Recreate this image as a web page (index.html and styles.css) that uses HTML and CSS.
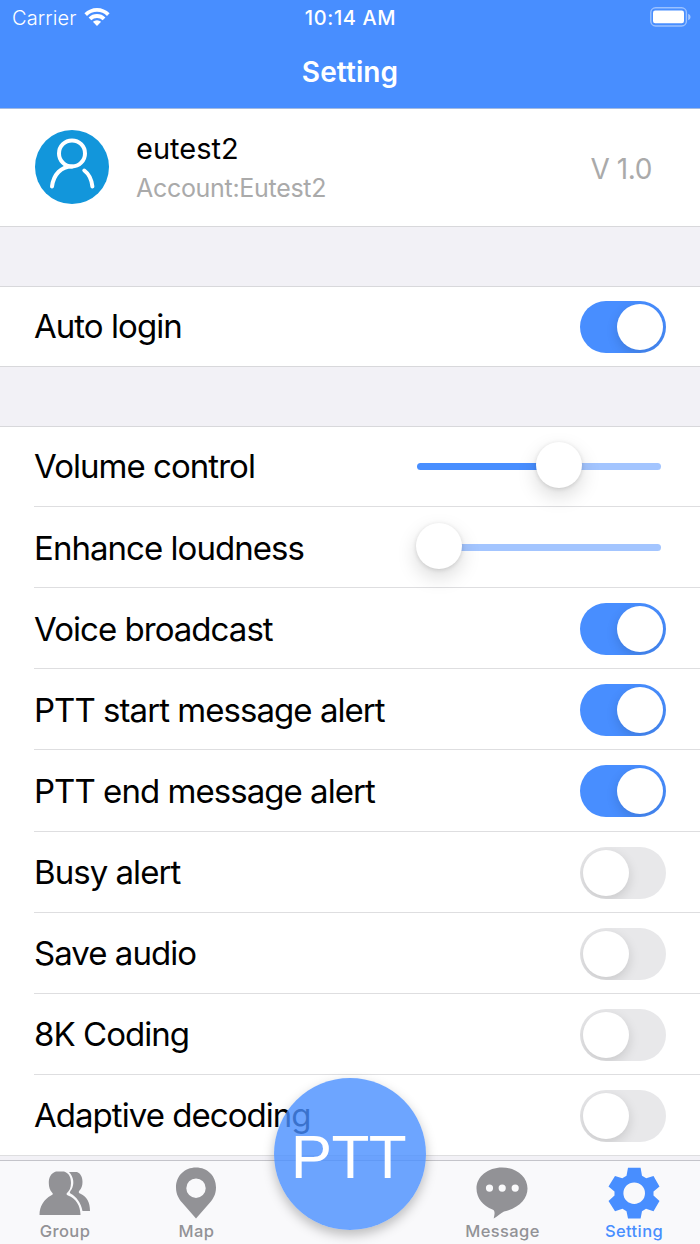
FILE: index.html
```html
<!DOCTYPE html>
<html lang="en">
<head>
    <meta charset="UTF-8">
    <meta name="viewport" content="width=device-width, initial-scale=1.0">
    <title>Setting</title>
    <link rel="stylesheet" href="styles.css">
</head>
<body>
    <header class="header">
        <div class="status-bar">
            <div class="carrier">
                <span>Carrier</span>
                <svg width="26" height="20" viewBox="0 0 26 20">
                    <path d="M0.4 6.2a18 18 0 0 1 25.2 0l-2.6 2.7a14.3 14.3 0 0 0-20 0z" fill="#fff"/>
                    <path d="M4.6 10.5a12 12 0 0 1 16.8 0l-2.7 2.7a8.2 8.2 0 0 0-11.4 0z" fill="#fff"/>
                    <path d="M8.9 14.8a6 6 0 0 1 8.2 0L13 19z" fill="#fff"/>
                </svg>
            </div>
            <div class="time">10:14 AM</div>
            <div class="battery">
                <svg width="41" height="20" viewBox="0 0 41 20">
                    <rect x="0.8" y="0.8" width="35.6" height="18.2" rx="4.8" fill="none" stroke="#fff" stroke-opacity="0.45" stroke-width="1.4"/>
                    <rect x="3" y="3.6" width="31" height="12.6" rx="2.2" fill="#fff"/>
                    <path d="M38.2 6.800v6.400q2.400-1 2.400-3.200t-2.400-3.200z" fill="#fff" fill-opacity="0.5"/>
                </svg>
            </div>
        </div>
        <h1 class="title">Setting</h1>
    </header>

    <main>
        <section class="profile">
            <svg class="avatar" width="74" height="74" viewBox="0 0 74 74">
                <circle cx="37" cy="37" r="37" fill="#1296db"/>
                <g fill="none" stroke="#fff" stroke-width="4" stroke-linecap="round">
                    <circle cx="37" cy="23.4" r="13"/>
                    <path d="M17 56.500C18.500 44.500 26 36.500 37 36.500"/>
                    <path d="M49.300 40.500C54 44 56.600 49.500 57.400 56.500"/>
                </g>
            </svg>
            <div class="profile-info">
                <div class="name">eutest2</div>
                <div class="account">Account:Eutest2</div>
            </div>
            <div class="version">V 1.0</div>
        </section>

        <section class="group">
            <div class="row">
                <span class="label">Auto login</span>
                <div class="switch on"></div>
            </div>
        </section>

        <section class="group settings">
            <div class="row">
                <span class="label">Volume control</span>
                <div class="slider"><div class="fill"></div><div class="thumb"></div><div class="rest"></div></div>
            </div>
            <div class="row">
                <span class="label">Enhance loudness</span>
                <div class="slider min"><div class="thumb"></div><div class="rest"></div></div>
            </div>
            <div class="row">
                <span class="label">Voice broadcast</span>
                <div class="switch on"></div>
            </div>
            <div class="row">
                <span class="label">PTT start message alert</span>
                <div class="switch on"></div>
            </div>
            <div class="row">
                <span class="label">PTT end message alert</span>
                <div class="switch on"></div>
            </div>
            <div class="row">
                <span class="label">Busy alert</span>
                <div class="switch"></div>
            </div>
            <div class="row">
                <span class="label">Save audio</span>
                <div class="switch"></div>
            </div>
            <div class="row">
                <span class="label">8K Coding</span>
                <div class="switch"></div>
            </div>
            <div class="row">
                <span class="label">Adaptive decoding</span>
                <div class="switch"></div>
            </div>
        </section>
    </main>

    <nav class="tab-bar">
        <div class="tab">
            <svg width="52" height="52" viewBox="0 0 52 52" fill="#929296">
                <path d="M30 5h8c4 1.500 5.500 5.500 5.500 10 0 4-1.200 6.500-3 8.500-1.300 1.500-.8 2.500 1 3.300C48 30 51 35 51 44h-7.500C42 36 37.500 29.500 31.500 26.500c-1.500-1 0-2.500 1-4 3-5 2.500-12.500-2.500-17.500z"/>
                <path d="M17 4.500h8c5 1.500 7 6 7 11.500 0 5-1.800 8-4 10-1.200 1.200 0 2 1 2.400C37 31.500 41.500 38.500 41.500 48H.5C.5 39 5 32.500 12 28.500c2-1 2.500-1.500 1-3-2-2-3.200-5.500-3.200-9.500 0-5.500 2.200-10 7.200-11.500z"/>
            </svg>
            <span>Group</span>
        </div>
        <div class="tab">
            <svg width="52" height="52" viewBox="0 0 52 52" fill="#929296">
                <path fill-rule="evenodd" d="M26 .5C14.500.5 6 9 6 20.500c0 7 3 11.500 6 15L26 51.500l14-16c3-3.500 6-8 6-15C46 9 37.500.5 26 .5zm0 11a9.700 9.700 0 1 1 0 19.400 9.700 9.700 0 0 1 0-19.400z"/>
            </svg>
            <span>Map</span>
        </div>
        <div class="tab"></div>
        <div class="tab">
            <svg width="52" height="52" viewBox="0 0 52 52" fill="#929296">
                <path fill-rule="evenodd" d="M26 .5C12 .5.500 9.500.500 21.500.5 31 7 39 16.500 42.500c2.500 1 2.500 3.500 1.200 9 4-2.500 7-5 10.300-7C43 41 51.500 32 51.500 21.500 51.500 9.500 40 .5 26 .5zM13.500 17.500a3.600 3.600 0 1 1 0 7.200 3.600 3.600 0 0 1 0-7.200zm12.700 0a3.600 3.600 0 1 1 0 7.200 3.600 3.600 0 0 1 0-7.200zm13 0a3.600 3.600 0 1 1 0 7.200 3.600 3.600 0 0 1 0-7.200z"/>
            </svg>
            <span>Message</span>
        </div>
        <div class="tab active">
            <svg width="52" height="52" viewBox="0 0 52 52" fill="#488eff">
                <path fill-rule="evenodd" d="M20 .8h12.600l1.400 8 4.200 2.500L45.500 9l6 10.500-6 5v4l6 5.500-6 10.300-7.500-2.500-4 2.500-1.400 7.200H20l-1.500-7.200-4-2.500L7 44.300.5 34l6-5.500v-4l-6-5L7 9l7.300 2.300 4.200-2.500zM26.200 15.400a10.800 10.800 0 1 0 0 21.600 10.800 10.800 0 0 0 0-21.600z"/>
            </svg>
            <span>Setting</span>
        </div>
    </nav>
    <div class="ptt">PTT</div>
</body>
</html>
```
FILE: styles.css
```css
* {
    margin: 0;
    padding: 0;
    box-sizing: border-box;
}

body {
    position: relative;
    height: 1244px;
    overflow: hidden;
    display: flex;
    flex-direction: column;
    background: #f2f1f6;
    font-family: Inter, "Liberation Sans", sans-serif;
    color: #000;
}

.header {
    height: 109px;
    background: #488eff;
    border-bottom: 1px solid #a3bae1;
    color: #fff;
}

.status-bar {
    display: grid;
    grid-template-columns: 1fr auto 1fr;
    align-items: center;
    height: 36px;
    padding: 0 9px 0 12px;
}

.carrier {
    display: flex;
    align-items: center;
    gap: 8px;
    font-size: 20px;
    font-weight: 300;
    letter-spacing: 0.1px;
}

.carrier svg {
    margin-top: -3px;
}

.time {
    margin-left: -2px;
    font-size: 20px;
    font-weight: 500;
    letter-spacing: 0.6px;
}

.battery {
    display: flex;
    justify-content: flex-end;
    margin-top: -2px;
}

.title {
    font-size: 28px;
    line-height: 34px;
    font-weight: 600;
    text-align: center;
    margin-top: 19px;
    letter-spacing: 0.1px;
}

.profile {
    display: flex;
    align-items: center;
    height: 118px;
    padding: 2px 48px 0 35px;
    background: #fff;
    border-bottom: 1px solid #d8d8db;
}

.avatar {
    margin-top: -4px;
}

.profile-info {
    flex: 1;
    margin-left: 27px;
}

.name {
    font-size: 29px;
    line-height: 40px;
}

.account {
    font-size: 25px;
    line-height: 39px;
    letter-spacing: -0.3px;
    color: #aaa;
}

.version {
    font-size: 28px;
    letter-spacing: -0.4px;
    color: #aaa;
}

.group {
    margin-top: 59px;
    background: #fff;
    border-top: 1px solid #d8d8db;
}

.row {
    display: flex;
    align-items: center;
    justify-content: space-between;
    height: 80px;
    padding-right: 34px;
    padding-left: 34px;
    border-bottom: 1px solid #d8d8db;
}

.settings .row {
    height: 81.13px;
    margin-left: 34px;
    padding-top: 2px;
    padding-left: 0;
    border-color: #dedee0;
}

.settings .row:first-child {
    height: 80px;
    padding-top: 0;
}

.settings .row:last-child {
    margin-left: 0;
    padding-left: 34px;
}

.label {
    margin-top: -1px;
    font-size: 33px;
    letter-spacing: -0.96px;
    white-space: nowrap;
}

.switch {
    width: 86px;
    height: 52px;
    padding: 3px;
    overflow: hidden;
    border-radius: 26px;
    background: #e8e8ea;
}

.switch::before {
    content: "";
    display: block;
    width: 46px;
    height: 46px;
    border-radius: 50%;
    background: #fff;
    box-shadow: 0 4px 12px rgba(0, 0, 0, 0.14);
}

.switch.on {
    background: #488eff;
}

.switch.on::before {
    margin-left: auto;
}

.slider {
    display: flex;
    align-items: center;
    width: 244px;
    margin-right: 5px;
}

.fill,
.rest {
    height: 7px;
    background: #488eff;
    border-radius: 4px;
}

.fill {
    width: 142px;
    margin-right: -23px;
}

.rest {
    flex: 1;
    margin-left: -23px;
    background: #a3c5ff;
}

.thumb {
    flex: none;
    z-index: 1;
    width: 46px;
    height: 46px;
    margin-top: -4px;
    border-radius: 50%;
    background: #fff;
    box-shadow: 0 8px 20px rgba(0, 0, 0, 0.15), 0 1px 4px rgba(0, 0, 0, 0.13);
}

.min {
    margin-top: -1px;
}

.min .thumb {
    margin-left: -1px;
}

.tab-bar {
    display: grid;
    grid-template-columns: 130px 133px 174px 131px 132px;
    height: 84px;
    margin-top: auto;
    padding-top: 6px;
    background: #f9f9fb;
    border-top: 1px solid #c4c4ca;
}

.tab {
    display: flex;
    flex-direction: column;
    align-items: center;
    font-size: 16.5px;
    font-weight: 500;
    letter-spacing: 0.4px;
    line-height: 24px;
    color: #929296;
}

.tab svg {
    margin-left: -1px;
}

.active {
    color: #488eff;
}

/* floating push-to-talk button */
.ptt {
    position: absolute;
    left: 274px;
    top: 1078px;
    width: 152px;
    height: 152px;
    padding-right: 3px;
    border-radius: 50%;
    background: rgba(72, 142, 255, 0.8);
    box-shadow: 0 5px 12px rgba(0, 0, 0, 0.25);
    color: #fff;
    font-family: "Liberation Sans", sans-serif;
    font-size: 62px;
    line-height: 157px;
    letter-spacing: -0.6px;
    text-align: center;
}
```
